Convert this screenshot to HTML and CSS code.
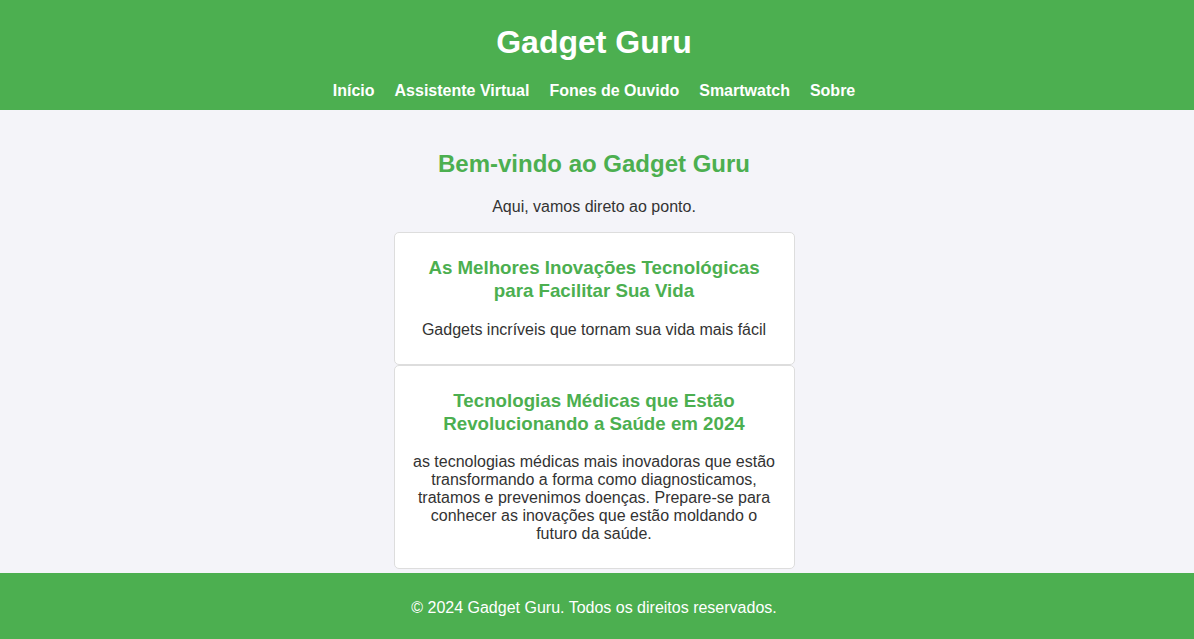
FILE: index.html
```html
<!DOCTYPE html>
<html lang="pt-BR">
<head>
<meta charset="utf-8">
<title>Gadget Guru</title>
<link rel="stylesheet" href="styles.css">
</head>
<body>
<header class="site-header">
  <h1 class="site-title">Gadget Guru</h1>
  <nav class="site-nav">
    <a href="#">Início</a>
    <a href="#">Assistente Virtual</a>
    <a href="#">Fones de Ouvido</a>
    <a href="#">Smartwatch</a>
    <a href="#">Sobre</a>
  </nav>
</header>
<main class="content">
  <h2 class="welcome">Bem-vindo ao Gadget Guru</h2>
  <p class="intro">Aqui, vamos direto ao ponto.</p>
  <article class="card">
    <h3 class="card-title">As Melhores Inovações Tecnológicas para Facilitar Sua Vida</h3>
    <p class="card-text">Gadgets incríveis que tornam sua vida mais fácil</p>
  </article>
  <article class="card">
    <h3 class="card-title">Tecnologias Médicas que Estão Revolucionando a Saúde em 2024</h3>
    <p class="card-text">as tecnologias médicas mais inovadoras que estão transformando a forma como diagnosticamos, tratamos e prevenimos doenças. Prepare-se para conhecer as inovações que estão moldando o futuro da saúde.</p>
  </article>
</main>
<footer class="site-footer">
  <p class="footer-text">© 2024 Gadget Guru. Todos os direitos reservados.</p>
</footer>
</body>
</html>
```
FILE: styles.css
```css
* { box-sizing: border-box; }
html, body { margin: 0; padding: 0; }
body {
  font-family: "Liberation Sans", Arial, sans-serif;
  background: #f4f4f9;
  color: #333;
  font-size: 16px;
}
.site-header {
  background: #4caf50;
  color: #fff;
  text-align: center;
  padding: 0 6px 10px 0;
  overflow: hidden;
}
.site-title {
  font-size: 32px;
  margin: 24px 0 21px;
  line-height: 37px;
}
.site-nav {
  display: flex;
  justify-content: center;
  line-height: 18px;
}
.site-nav a {
  color: #fff;
  text-decoration: none;
  font-weight: bold;
  margin: 0 10px;
}
.content {
  display: flex;
  flex-direction: column;
  align-items: center;
  padding: 20px 6px 80px 0;
  text-align: center;
}
.welcome {
  color: #4caf50;
  font-size: 24px;
  line-height: 28px;
  margin: 20px 0 20px;
}
.intro {
  margin: 0 0 16px;
  line-height: 18px;
}
.card {
  width: 401px;
  background: #fff;
  border: 1px solid #ddd;
  border-radius: 5px;
  padding: 10px 15px;
}
.card-title {
  color: #4caf50;
  font-size: 18.72px;
  line-height: 23px;
  margin: 13px 0 18.5px;
}
.card-text {
  margin: 0 0 15px;
  line-height: 18px;
}
.site-footer {
  position: fixed;
  left: 0;
  right: 0;
  bottom: 0;
  height: 66px;
  padding: 4px 6px 0 0;
  background: #4caf50;
  color: #fff;
  display: flex;
  align-items: center;
  justify-content: center;
}
.footer-text {
  margin: 0;
  line-height: 18px;
}
```
